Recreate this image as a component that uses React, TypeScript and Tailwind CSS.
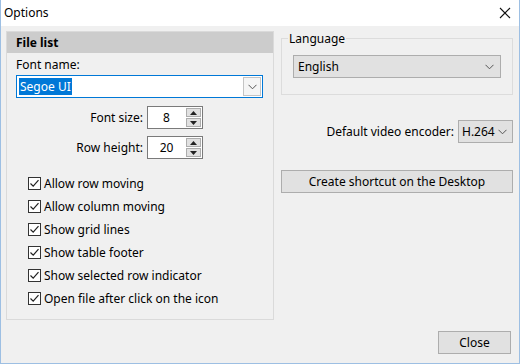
import React from 'react';

const font = { fontFamily: '"Noto Sans", "Open Sans", sans-serif' };

const Chevron = () => (
  <svg width="9" height="6" viewBox="0 0 9 6" fill="none">
    <path d="M0.5 0.8 L4.5 4.8 L8.5 0.8" stroke="#555" strokeWidth="1" />
  </svg>
);

const Spin: React.FC<{ value: string }> = ({ value }) => (
  <div className="flex h-[23px] w-[56px] border border-[#7a7a7a] bg-white">
    <div className="flex flex-1 items-center justify-center">{value}</div>
    <div className="flex w-[17px] flex-col gap-px p-px">
      <div className="flex flex-1 items-center justify-center border border-[#adadad] bg-[#e1e1e1]">
        <svg width="7" height="4" viewBox="0 0 7 4"><path d="M3.5 0 L7 4 L0 4 Z" fill="#222" /></svg>
      </div>
      <div className="flex flex-1 items-center justify-center border border-[#adadad] bg-[#e1e1e1]">
        <svg width="7" height="4" viewBox="0 0 7 4"><path d="M0 0 L7 0 L3.5 4 Z" fill="#222" /></svg>
      </div>
    </div>
  </div>
);

const Check: React.FC<{ label: string }> = ({ label }) => (
  <div className="flex h-[23px] items-center gap-[3px] whitespace-nowrap">
    <div className="flex h-[13px] w-[13px] items-center justify-center border border-[#333] bg-white">
      <svg width="11" height="11" viewBox="0 0 11 11" fill="none">
        <path d="M1.5 5.5 L4.2 8.2 L9.5 2.2" stroke="#222" strokeWidth="1.2" />
      </svg>
    </div>
    <span>{label}</span>
  </div>
);

const options = [
  'Allow row moving',
  'Allow column moving',
  'Show grid lines',
  'Show table footer',
  'Show selected row indicator',
  'Open file after click on the icon',
];

export default function App() {
  return (
    <div
      style={font}
      className="flex h-[364px] w-[520px] flex-col border-x border-b border-[#9dbfe3] text-[12px] text-black"
    >
      {/* Title bar */}
      <div className="flex h-[26px] items-center justify-between bg-white pl-[3px] pr-[8px]">
        <span>Options</span>
        <svg width="12" height="12" viewBox="0 0 12 12" fill="none">
          <path d="M1 1 L11 11 M11 1 L1 11" stroke="#111" strokeWidth="1.1" />
        </svg>
      </div>

      {/* Body */}
      <div className="flex flex-1 flex-col bg-[#f0f0f0]">
        <div className="flex gap-[7px] pl-[5px] pt-[5px]">
          {/* File list panel */}
          <div className="flex h-[289px] w-[268px] flex-col border border-[#dadada]">
            <div className="flex h-[21px] items-center bg-[#cccccc] pl-[9px] font-bold">File list</div>
            <div className="flex flex-col px-[9px] pt-[3px]">
              <span className="leading-[17px]">Font name:</span>
              <div className="mt-[2px] flex h-[23px] w-[247px] items-center border border-[#0078d7] bg-white pl-[2px] pr-[1px]">
                <span className="bg-[#0078d7] px-[1px] leading-[17px] text-white">Segoe UI</span>
                <div className="ml-auto flex h-[19px] w-[18px] items-center justify-center border border-[#c4c4c4] bg-[#f5f5f5]">
                  <Chevron />
                </div>
              </div>
              <div className="mt-[8px] flex items-center gap-[4px]">
                <span className="w-[127px] whitespace-nowrap text-right">Font size:</span>
                <Spin value="8" />
              </div>
              <div className="mt-[7px] flex items-center gap-[4px]">
                <span className="w-[127px] whitespace-nowrap text-right">Row height:</span>
                <Spin value="20" />
              </div>
              <div className="mt-[13px] flex flex-col pl-[12px]">
                {options.map((o) => (
                  <Check key={o} label={o} />
                ))}
              </div>
            </div>
          </div>

          {/* Right column */}
          <div className="flex w-[232px] flex-col">
            <div className="relative mt-[7px] h-[57px] border border-[#dcdcdc] px-[11px] pt-[16px]">
              <span className="absolute -top-[9px] left-[6px] bg-[#f0f0f0] px-[1px] leading-[17px]">Language</span>
              <div className="flex h-[23px] items-center justify-between border border-[#adadad] bg-[#e1e1e1] pl-[4px] pr-[6px]">
                <span>English</span>
                <Chevron />
              </div>
            </div>
            <div className="mt-[25px] flex items-center justify-end gap-[4px]">
              <span className="whitespace-nowrap">Default video encoder:</span>
              <div className="flex h-[23px] w-[55px] items-center justify-between border border-[#adadad] bg-[#e1e1e1] pl-[3px] pr-[5px]">
                <span>H.264</span>
                <Chevron />
              </div>
            </div>
            <button className="mt-[27px] flex h-[23px] items-center justify-center border border-[#adadad] bg-[#e1e1e1]">
              Create shortcut on the Desktop
            </button>
          </div>
        </div>

        <div className="mt-auto flex justify-end pb-[9px] pr-[8px]">
          <button className="flex h-[23px] w-[73px] items-center justify-center border border-[#adadad] bg-[#e1e1e1]">
            Close
          </button>
        </div>
      </div>
    </div>
  );
}
